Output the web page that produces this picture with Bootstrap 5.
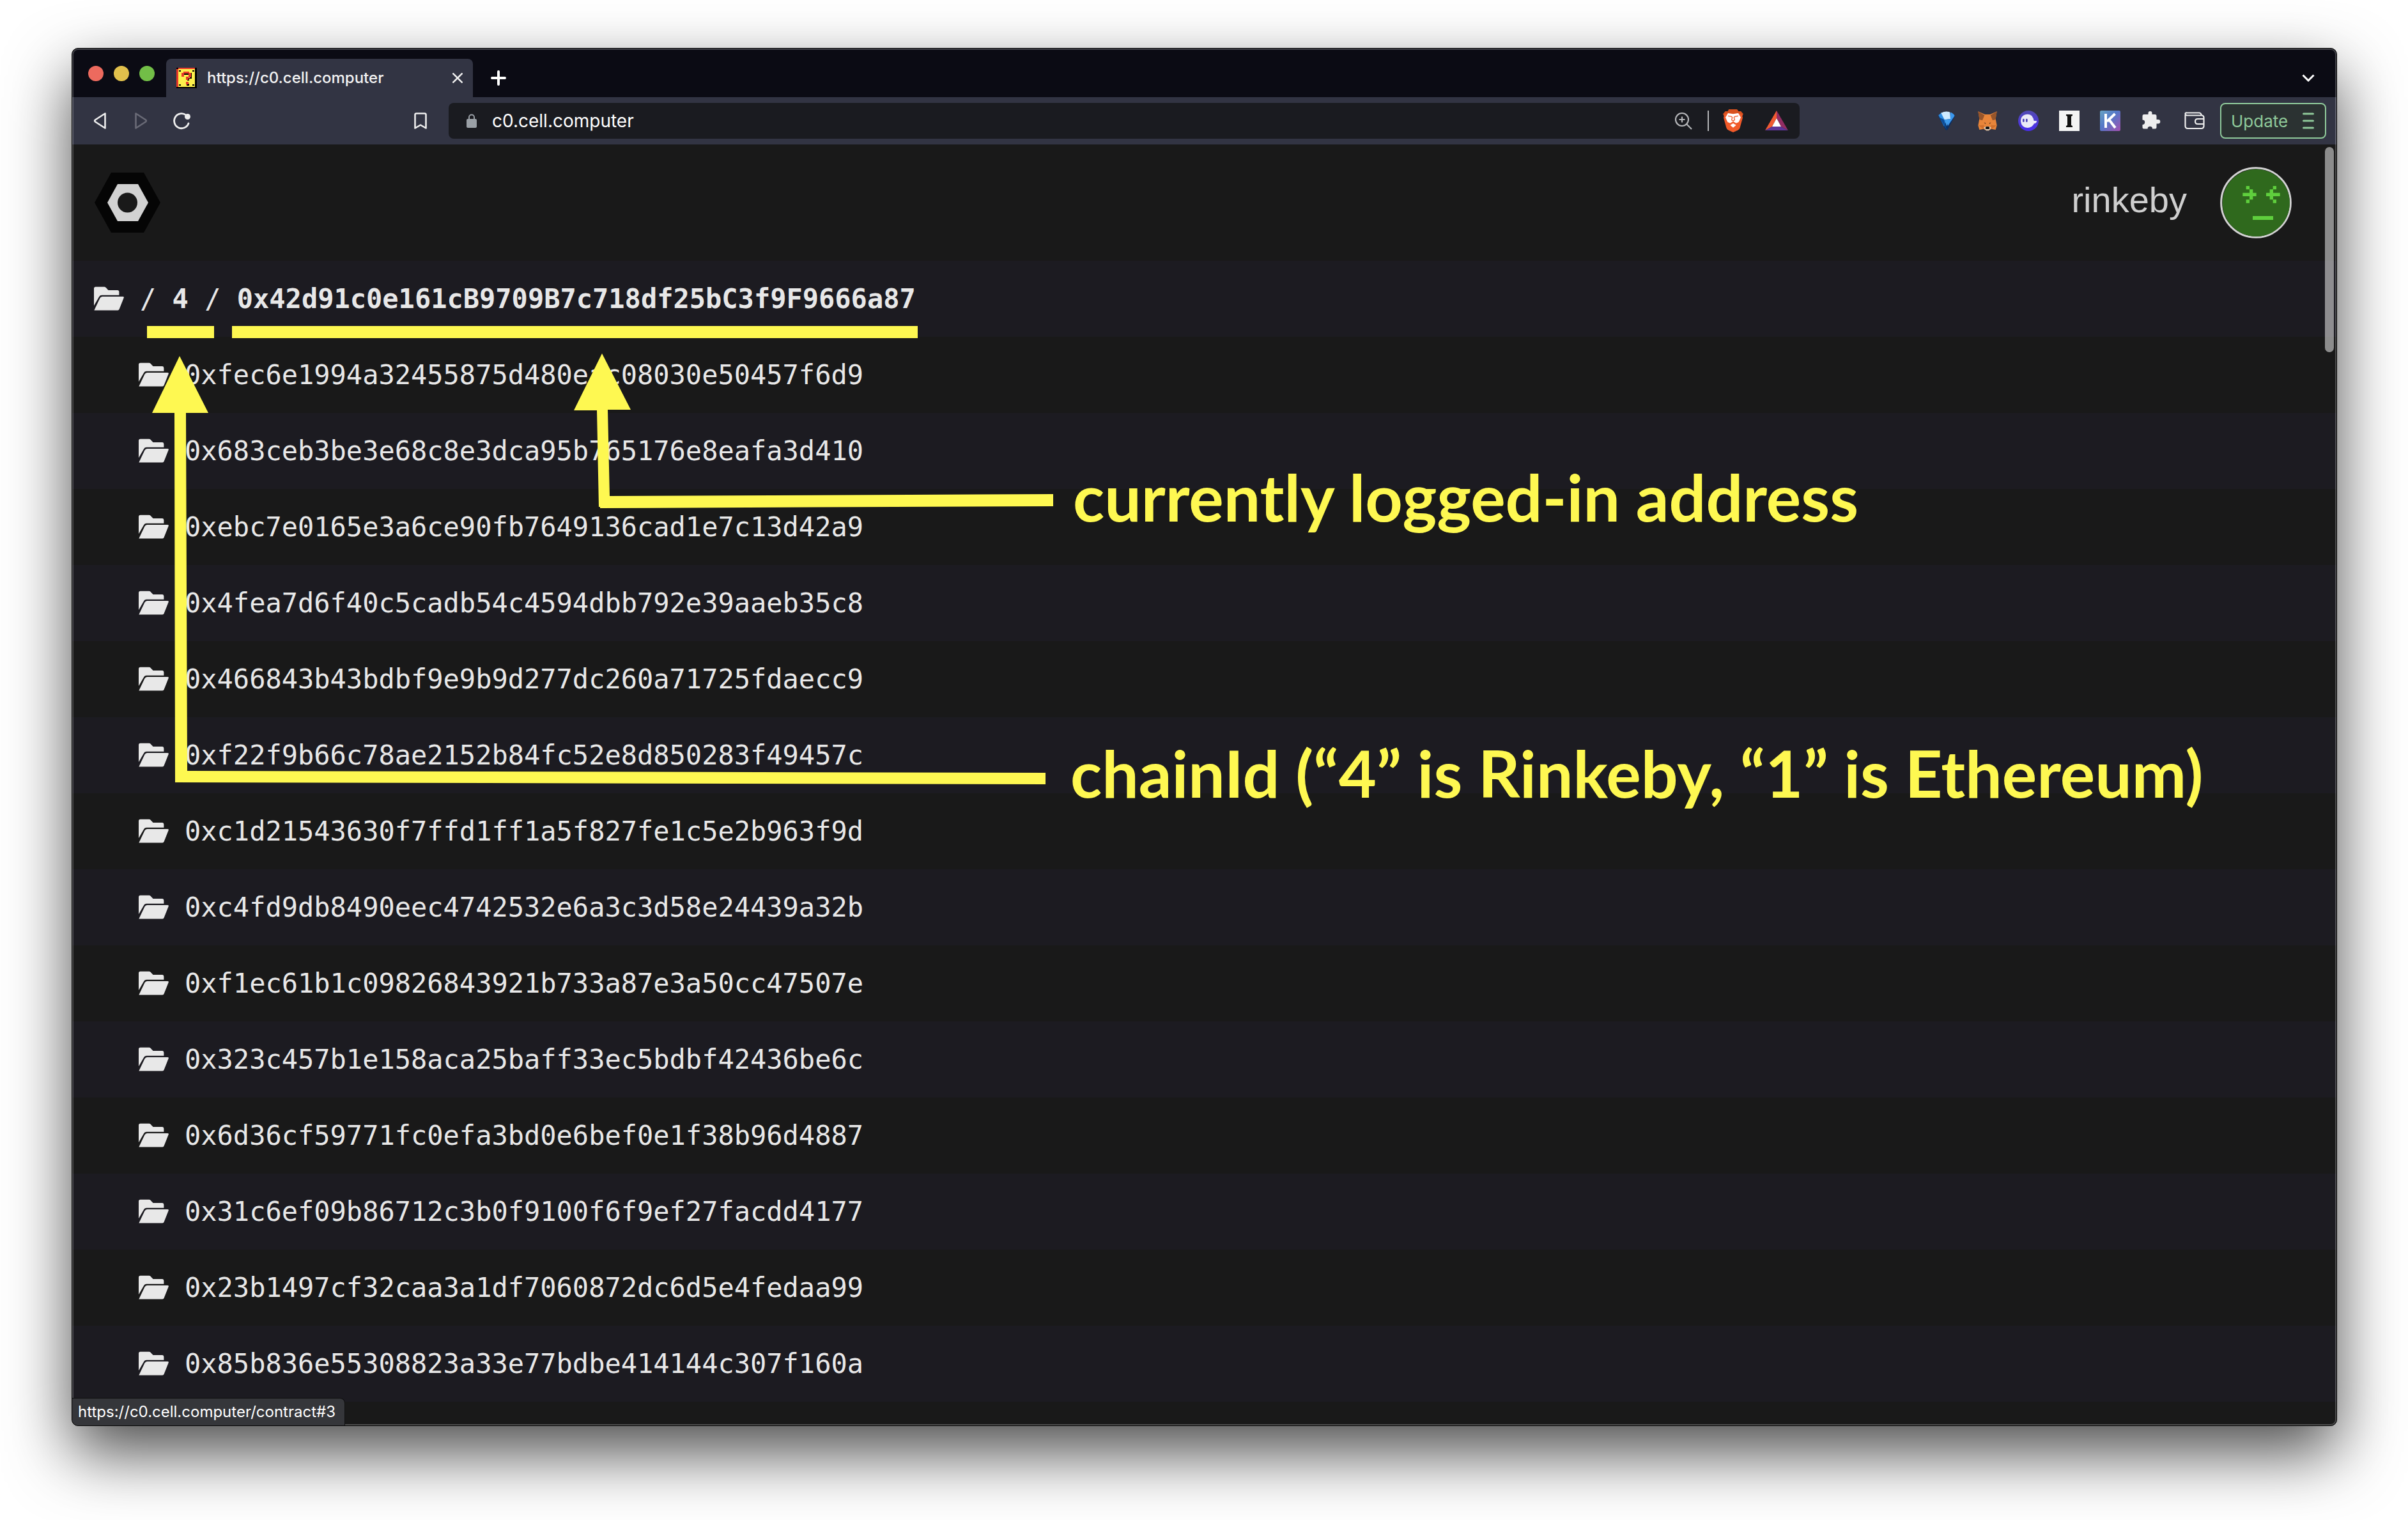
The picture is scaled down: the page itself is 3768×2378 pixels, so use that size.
<!DOCTYPE html>
<html lang="en">
<head>
<meta charset="utf-8">
<meta name="viewport" content="width=device-width, initial-scale=1">
<title>https://c0.cell.computer</title>
<link href="https://cdn.jsdelivr.net/npm/bootstrap@5.3.0/dist/css/bootstrap.min.css" rel="stylesheet">
<style>
  :root { --ui: Inter, "Liberation Sans", sans-serif; --note: #fef851; }
  body { background: #fff; height: 100vh; padding: 75px 111px 147px 112px; font-family: var(--ui); }
  svg { display: block; flex: none; }
  .browser { min-height: 0; border: 1px solid #000; border-radius: 10px; background: #191919; box-shadow: 0 42px 100px rgba(0,0,0,.7); }
  .browser-clip { border-radius: 9px; min-height: 0; }
  .browser-clip::after { content: ""; position: absolute; inset: 0; border: 2px solid rgba(255,255,255,.22); border-radius: 9px; pointer-events: none; }
  .icon-btn { background: none; border: 0; padding: 0; color: #eee; }
  .tab-strip { height: 76px; background: #0b0b14; padding: 0 34px 0 25px; }
  .light { width: 24px; height: 24px; border-radius: 50%; border: 0; padding: 0; }
  .light-close { background: #ed6a5e; }
  .light-min { background: #e1c04c; }
  .light-zoom { background: #72be47; }
  .lights { gap: 16px; padding-top: 2px; margin-right: 18px; }
  .page-tab { width: 480px; height: 60px; background: #323443; border-radius: 8px 8px 0 0; padding: 0 16px; gap: 16px; color: #f2f2f2; font-size: 24px; font-weight: 500; }
  .plus-btn { margin: 16px 0 0 28px; }
  .list-btn { margin-top: 16px; }
  .tool-strip { height: 74px; background: #323443; padding-right: 16px; }
  .nav-tools { width: 589px; padding: 0 28px 0 27px; gap: 32px; }
  .address { height: 56px; background: #1a1b20; border-radius: 8px; padding: 0 18px 0 28px; margin-right: 214px; }
  .address input { background: none; border: 0; outline: 0; color: #fff; font-size: 28px; line-height: 36px; padding: 0; margin-left: 24px; }
  .divide { width: 2px; height: 32px; background: #b5b6b9; margin: 0 22px 0 24px; }
  .rewards-btn { margin-left: 34px; }
  .ext { gap: 32px; }
  .wallet-btn { margin-left: 36px; }
  .update-btn { width: 166px; height: 56px; border: 2px solid #8fc99a; border-radius: 8px; background: #2b3232; color: #8fc99a; font-size: 26px; padding: 0 17px 0 15px; margin-left: 24px; }
  .site { background: #191919; min-height: 0; flex: 1 1 0; }
  .site-head { height: 182px; padding: 0 70px 0 35px; }
  .chain { font: 56px/64px "Liberation Sans", Arial, sans-serif; color: #cfcfcf; margin-right: 52px; padding-bottom: 8px; }
  .tree { font: 42px/50px "DejaVu Sans Mono", monospace; }
  .tree li { height: 119px; padding-left: 104px; }
  .tree li:first-child { padding-left: 34px; }
  .tree li:nth-child(odd) { background: #1c1b21; }
  .tree a, .tree li { color: #e8e8e8; text-decoration: none; }
  .tree svg { width: 47px; height: 38px; margin: 0 25px 2px 0; }
  .scroll-thumb { right: 4px; top: 4px; width: 14px; height: 321px; border-radius: 7px; background: rgba(255,255,255,.5); }
  .notes { left: 0; top: 0; }
  .note-label { color: var(--note); font: 700 102px/96px Lato, sans-serif; white-space: nowrap; }
  .note-address { left: 1566px; top: 503px; }
  .note-chain { left: 1562px; top: 935px; }
  .status-tip { left: 0; bottom: 0; height: 43px; background: #35363a; border: solid #111; border-width: 1px 1px 0 0; border-radius: 0 8px 0 9px; color: #fff; font-size: 24px; line-height: 42px; padding: 0 14px 0 9px; z-index: 2; }
</style>
</head>
<body class="d-flex flex-column overflow-hidden">
<svg width="0" height="0" class="position-absolute" aria-hidden="true">
  <symbol id="folder" viewBox="351 124 142 114">
    <path fill="#e8e8e8" d="M351 215V134q0-8 8-8h41q4 0 7 3l12 13h43q8 0 8 8v15h-82q-8 0-12 7zM352 237l27-57q4-8 12-8h97q6 0 4 6l-21 53q-2 6-8 6z"/>
  </symbol>
</svg>

<div class="browser flex-grow-1 d-flex flex-column">
<div class="browser-clip flex-grow-1 d-flex flex-column position-relative overflow-hidden">

  <header class="tab-strip d-flex align-items-end flex-shrink-0">
    <div class="lights d-flex align-self-center">
      <button class="light light-close" aria-label="Close window"></button>
      <button class="light light-min" aria-label="Minimise"></button>
      <button class="light light-zoom" aria-label="Zoom"></button>
    </div>
    <div class="page-tab d-flex align-items-center">
      <svg width="32" height="32" viewBox="0 0 24 32" preserveAspectRatio="none" shape-rendering="crispEdges">
        <path fill="#000" d="M0 0h24v32H0z"/><path fill="#e8382a" d="M0 2h2V0h20v2H2v28H0z"/><path fill="#fdf04c" d="M2 2h20v28H2z"/>
        <path fill="#000" d="M3 4h2v2H3zM19 4h2v2h-2zM3 26h2v2H3zM19 26h2v2h-2zM9 9h6v2H9zM16 8h2v9h-3v3h-2v-4h3zM12 25h3v3h-3z"/>
        <path fill="#e8382a" d="M8 6h7v2h2v7h-3v4h-3v-5h3V9H9v5H6V8h2zM11 22h3v4h-3z"/>
      </svg>
      <span class="flex-grow-1">https://c0.cell.computer</span>
      <button class="icon-btn" aria-label="Close tab"><svg width="16" height="16" viewBox="0 0 16 16" stroke="currentColor" stroke-width="2.6" stroke-linecap="round"><path d="M1.3 1.3l13.4 13.4M14.7 1.3L1.3 14.7"/></svg></button>
    </div>
    <button class="icon-btn plus-btn align-self-center" aria-label="New tab"><svg width="24" height="24" viewBox="0 0 24 24" stroke="#fff" stroke-width="4" stroke-linecap="round"><path d="M12 2v20M2 12h20"/></svg></button>
    <button class="icon-btn list-btn ms-auto align-self-center" aria-label="Search tabs"><svg width="20" height="12" viewBox="0 0 20 12" fill="none" stroke="#fff" stroke-width="3"><path d="M1.5 1.5L10 10l8.500-8.500"/></svg></button>
  </header>

  <nav class="tool-strip d-flex align-items-center flex-shrink-0" aria-label="Browser toolbar">
    <div class="nav-tools d-flex align-items-center flex-shrink-0">
      <button class="icon-btn" aria-label="Back"><svg width="32" height="32" viewBox="0 0 32 32" fill="none" stroke="currentColor" stroke-width="2.600" stroke-linejoin="round"><path d="M24.500 4.500v23L9 17.500q-1.500-1.500 0-3z"/></svg></button>
      <button class="icon-btn" aria-label="Forward"><svg width="32" height="32" viewBox="0 0 32 32" fill="none" stroke="#696a76" stroke-width="2.600" stroke-linejoin="round"><path d="M8.500 4.500v23L24 17.500q1.500-1.500 0-3z"/></svg></button>
      <button class="icon-btn" aria-label="Reload"><svg width="32" height="32" viewBox="0 0 32 32" fill="none" stroke="currentColor" stroke-width="2.800" stroke-linecap="round"><path d="M27 20A11.500 11.500 0 1 1 23 7"/><circle cx="25.500" cy="9.500" r="4.500" fill="currentColor" stroke="none"/></svg></button>
      <button class="icon-btn ms-auto" aria-label="Bookmark"><svg width="32" height="32" viewBox="0 0 32 32" fill="none" stroke="currentColor" stroke-width="2.600" stroke-linejoin="round"><path d="M7.500 27.500V6.500q0-2 2-2h13q2 0 2 2v21L16 22.500z"/></svg></button>
    </div>
    <div class="address d-flex align-items-center flex-grow-1">
      <svg width="16" height="22" viewBox="0 0 16 22"><path fill="none" stroke="#9aa0a6" stroke-width="2" d="M4 9V5.500a4 4 0 0 1 8 0V9"/><rect y="8" width="16" height="14" rx="2" fill="#9aa0a6"/></svg>
      <input class="flex-grow-1" type="text" aria-label="Address" value="c0.cell.computer">
      <button class="icon-btn" aria-label="Zoom level"><svg width="28" height="28" viewBox="0 0 28 28" fill="none" stroke="#b5b6b9" stroke-width="2.200"><circle cx="12" cy="12" r="10"/><path d="M19 19l8 8M12 7.500v9M7.500 12h9"/></svg></button>
      <span class="divide"></span>
      <button class="icon-btn" aria-label="Shields"><svg width="32" height="36" viewBox="0 0 96 108">
        <path fill="#f15a29" d="M28 3h38l8 8 10-1 11 12-4 10 2 8-13 46q-2 8-10 12L48 108 26 98q-8-4-10-12L3 40l2-8L1 22 12 10l10 1z"/>
        <path fill="#d9521f" d="M28 0h38l8 10 10-1 11 13-3 4-20-8-24 4-24-4-20 8-3-4L12 9l10 1z"/>
        <path fill="#fff" d="M24 18l24 4 24-4 12 20-10 22-14 6-12-6-12 6-14-6-10-22z"/>
        <path fill="none" stroke="#f15a29" stroke-width="4" d="M24 31l16 3 4 4-3 12 7 4 7-4-3-12 4-4 16-3M34 68l14-9 14 9"/>
        <path fill="#fff" d="M34 74l14-8 14 8-14 12z"/>
      </svg></button>
      <button class="icon-btn rewards-btn" aria-label="Rewards"><svg width="36" height="32" viewBox="0 0 36 32"><path fill="#f15a32" d="M18 0v12L11 25 0 31z"/><path fill="#932c63" d="M18 0l18 31-11-6-7-13z"/><path fill="#5f3597" d="M0 31l11-6h14l11 6z"/><path fill="#fff" d="M18 12l7 13H11z"/></svg></button>
    </div>
    <div class="ext d-flex align-items-center">
      <button class="icon-btn" aria-label="Gem extension"><svg width="32" height="32" viewBox="0 0 96 96">
        <path fill="#0b2f63" d="M8 24Q48-12 88 24L54 88q-6 8-12 0z"/><path fill="#2d8ae0" d="M10 22Q24 6 48 5L48 44 36 74z"/><path fill="#cfeaff" d="M22 11Q46-1 64 8l2 32-28 2z"/><path fill="#3b97ec" d="M66 8q14 4 20 16L54 72l-8-30 20-3z"/><path fill="#0c4c97" d="M36 42l12 48-34-58z"/><path fill="#3f9bea" d="M40 44l8 30 10-32z"/>
      </svg></button>
      <button class="icon-btn" aria-label="Fox wallet"><svg width="32" height="32" viewBox="0 0 96 96">
        <path fill="#e8853a" d="M4 4l32 14h24L92 4l-6 34 6 32-6 20-20-4-12 8H42l-12-8-20 4L4 70l6-32z"/><path fill="#96552b" d="M4 4l30 18-10 24-14-4zM92 4L62 22l10 24 14-4z"/><path fill="#cf6f2c" d="M6 70l26-2-2 20zM90 70l-26-2 2 20zM30 54l10 4-2 6zM66 54l-10 4 2 6z"/><path fill="#46351f" d="M32 56l8 3-2 4zM64 56l-8 3 2 4z"/><path fill="#d9cdbd" d="M30 80l12-6h12l12 6-12 14H42z"/><path fill="#111" d="M41 75h14l3 9-4 3H42l-4-3z"/>
      </svg></button>
      <button class="icon-btn" aria-label="Ghost wallet"><svg width="32" height="32" viewBox="0 0 96 96">
        <defs><linearGradient id="gh" x2="0" y2="1"><stop stop-color="#534bb1"/><stop offset="1" stop-color="#4a2df0"/></linearGradient></defs>
        <circle cx="48" cy="48" r="48" fill="url(#gh)"/><path fill="#eceaf7" d="M12 50q0-32 34-33 22 0 28 31h13q0 12-12 13-10 20-31 20-29-1-32-31z"/><rect x="21" y="38" width="8" height="16" rx="4" fill="#4e44b8"/><rect x="36" y="38" width="8" height="16" rx="4" fill="#4e44b8"/>
      </svg></button>
      <button class="icon-btn" aria-label="Reader"><svg width="32" height="32" viewBox="0 0 32 32"><path fill="#f4f4f4" d="M0 0h32v32H0z"/><path fill="#111" d="M11 6h10v2l-2 1v14l2 1v2H11v-2l2-1V9l-2-1z"/></svg></button>
      <button class="icon-btn" aria-label="K wallet"><svg width="32" height="32" viewBox="0 0 32 32">
        <defs><linearGradient id="kg" x2="1" y2="1"><stop stop-color="#68a4c4"/><stop offset=".45" stop-color="#5478c8"/><stop offset="1" stop-color="#a550b0"/></linearGradient></defs>
        <rect width="32" height="32" rx="2" fill="url(#kg)"/><path fill="none" stroke="#fff" stroke-width="4" d="M9 5v22M23.500 5L11 17M14 14l10 13"/>
      </svg></button>
      <button class="icon-btn" aria-label="Extensions"><svg width="32" height="32" viewBox="0 0 32 32"><path fill="#eee" d="M5 6h6.500V4a3 3 0 0 1 6 0v2H22q2.500 0 2.500 2.500V14H27a3.300 3.300 0 0 1 0 6.600h-2.500V26q0 2.500-2.500 2.500h-4a3.700 3.700 0 0 0-7.400 0H5Q2.500 28.500 2.500 26v-4a3.700 3.700 0 0 0 0-7.400V8.500Q2.500 6 5 6z"/></svg></button>
    </div>
    <button class="icon-btn wallet-btn" aria-label="Wallet"><svg width="32" height="28" viewBox="0 0 32 28" fill="none" stroke="#eee" stroke-width="2.200"><path d="M1.500 5v17q0 4 4 4h21q4 0 4-4V9q0-3-3-3.500h-23q-3 0-3-2.200T4 1.500h19q3 0 4 4M30 11h-9q-4 0-4 4t4 4h9"/></svg></button>
    <button class="update-btn d-flex align-items-center justify-content-between">Update
      <svg width="18" height="26" viewBox="0 0 18 26" stroke="currentColor" stroke-width="3" stroke-linecap="round"><path d="M1.500 2h15M1.500 13h15M1.500 24h15"/></svg>
    </button>
  </nav>

  <main class="site position-relative overflow-hidden">
    <div class="site-head d-flex align-items-center">
      <a href="#" aria-label="Home"><svg width="103" height="94" viewBox="0 0 103 94"><path fill="#050505" d="M26 0h51l26 47-26 47H26L0 47z"/><path fill="#d2d2d2" d="M36 18h32l16 29-16 29H36L20 47z"/><circle cx="51.500" cy="47" r="15.500" fill="#191919"/></svg></a>
      <span class="chain ms-auto">rinkeby</span>
      <svg width="112" height="112" viewBox="222 183 336 336" role="img" aria-label="Account">
        <circle cx="390" cy="351" r="163" fill="#191919" stroke="#d3d3d3" stroke-width="9"/><circle cx="391" cy="352" r="158" fill="#2f691d"/>
        <path fill="#5fcf3d" d="M344 273h16v16h-16zM360 289h16v16h16v16h-16v16h-16v-16h-32v-16h32zM344 337h16v16h-16zM470 273h16v16h-16zM455 289h16v16h32v16h-32v16h-16v-16h-17v-16h17zM470 337h16v16h-16zM375 414h96v18h-96z"/>
      </svg>
    </div>

    <ul class="tree list-unstyled mb-0">
      <li class="d-flex align-items-center"><svg><use href="#folder"/></svg><span>/ <a href="#" class="fw-bold">4</a> / <a href="#" class="fw-bold">0x42d91c0e161cB9709B7c718df25bC3f9F9666a87</a></span></li>
      <li class="d-flex align-items-center"><svg><use href="#folder"/></svg><a href="#">0xfec6e1994a32455875d480eac08030e50457f6d9</a></li>
      <li class="d-flex align-items-center"><svg><use href="#folder"/></svg><a href="#">0x683ceb3be3e68c8e3dca95b765176e8eafa3d410</a></li>
      <li class="d-flex align-items-center"><svg><use href="#folder"/></svg><a href="#">0xebc7e0165e3a6ce90fb7649136cad1e7c13d42a9</a></li>
      <li class="d-flex align-items-center"><svg><use href="#folder"/></svg><a href="#">0x4fea7d6f40c5cadb54c4594dbb792e39aaeb35c8</a></li>
      <li class="d-flex align-items-center"><svg><use href="#folder"/></svg><a href="#">0x466843b43bdbf9e9b9d277dc260a71725fdaecc9</a></li>
      <li class="d-flex align-items-center"><svg><use href="#folder"/></svg><a href="#">0xf22f9b66c78ae2152b84fc52e8d850283f49457c</a></li>
      <li class="d-flex align-items-center"><svg><use href="#folder"/></svg><a href="#">0xc1d21543630f7ffd1ff1a5f827fe1c5e2b963f9d</a></li>
      <li class="d-flex align-items-center"><svg><use href="#folder"/></svg><a href="#">0xc4fd9db8490eec4742532e6a3c3d58e24439a32b</a></li>
      <li class="d-flex align-items-center"><svg><use href="#folder"/></svg><a href="#">0xf1ec61b1c09826843921b733a87e3a50cc47507e</a></li>
      <li class="d-flex align-items-center"><svg><use href="#folder"/></svg><a href="#">0x323c457b1e158aca25baff33ec5bdbf42436be6c</a></li>
      <li class="d-flex align-items-center"><svg><use href="#folder"/></svg><a href="#">0x6d36cf59771fc0efa3bd0e6bef0e1f38b96d4887</a></li>
      <li class="d-flex align-items-center"><svg><use href="#folder"/></svg><a href="#">0x31c6ef09b86712c3b0f9100f6f9ef27facdd4177</a></li>
      <li class="d-flex align-items-center"><svg><use href="#folder"/></svg><a href="#">0x23b1497cf32caa3a1df7060872dc6d5e4fedaa99</a></li>
      <li class="d-flex align-items-center"><svg><use href="#folder"/></svg><a href="#">0x85b836e55308823a33e77bdbe414144c307f160a</a></li>
    </ul>

    <div class="scroll-thumb position-absolute"></div>

    <svg class="notes position-absolute" width="1600" height="1050" viewBox="0 0 1600 1050" fill="#fef851" aria-hidden="true">
      <path d="M117 284h105v19H117zM250 284h1073v19H250z"/>
      <path d="M168 331L213 420H178L180 980 1523 983V1001L161 998 160 420H125z"/>
      <path d="M829 327L874 415 838 415 841 550 1535 547V566L826 569V567H824L821 416 785 416z"/>
    </svg>
    <span class="note-label note-address position-absolute">currently logged-in address</span>
    <span class="note-label note-chain position-absolute">chainId (“4” is Rinkeby, “1” is Ethereum)</span>
  </main>

  <div class="status-tip position-absolute">https://c0.cell.computer/contract#3</div>
</div>
</div>
<script src="https://cdn.jsdelivr.net/npm/bootstrap@5.3.0/dist/js/bootstrap.bundle.min.js"></script>
</body>
</html>
